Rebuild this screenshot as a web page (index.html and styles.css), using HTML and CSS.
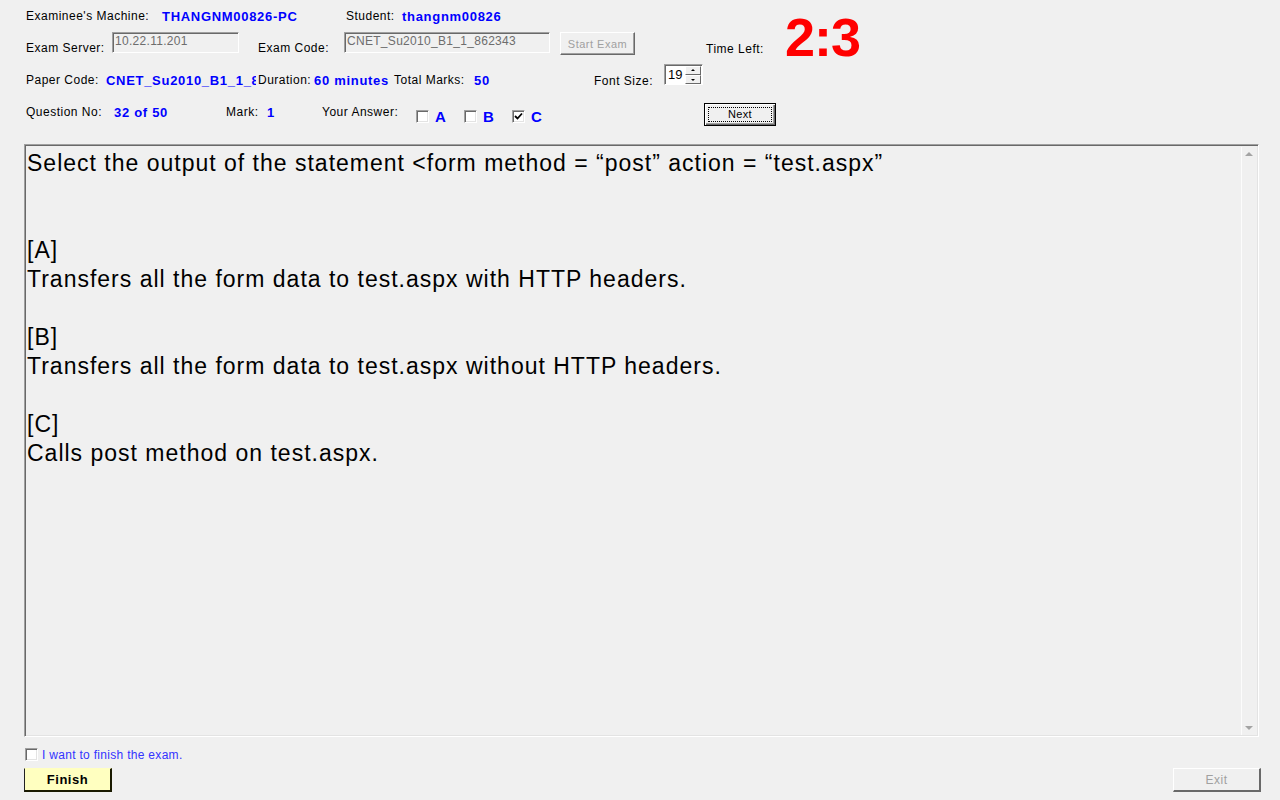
FILE: index.html
```html
<!DOCTYPE html>
<html>
<head>
<meta charset="utf-8">
<title>Exam Client</title>
<link rel="stylesheet" href="styles.css">
</head>
<body>
<div class="window">
  <div class="header">
    <div class="row row1">
      <span class="lbl w136">Examinee's Machine:</span>
      <span class="val w184">THANGNM00826-PC</span>
      <span class="lbl w56">Student:</span>
      <span class="val">thangnm00826</span>
    </div>
    <div class="row row2">
      <span class="lbl w86 low">Exam Server:</span>
      <span class="field w127">10.22.11.201</span>
      <span class="lbl w86 low gapl19">Exam Code:</span>
      <span class="field w206">CNET_Su2010_B1_1_862343</span>
      <span class="btn disabled start">Start Exam</span>
      <span class="lbl low timeleft">Time Left:</span>
      <span class="timer">2:3</span>
    </div>
    <div class="row row3">
      <span class="lbl w80">Paper Code:</span>
      <span class="val w150 clip">CNET_Su2010_B1_1_862343</span>
      <span class="lbl w56 dur">Duration:</span>
      <span class="val w80">60 minutes</span>
      <span class="lbl w80">Total Marks:</span>
      <span class="val w120">50</span>
      <span class="lbl w70 low2">Font Size:</span>
      <span class="spin"><span class="spinval">19</span><span class="spinbtns"><span class="sb up"></span><span class="sb down"></span></span></span>
    </div>
    <div class="row row4">
      <span class="lbl w88">Question No:</span>
      <span class="val w112">32 of 50</span>
      <span class="lbl w41">Mark:</span>
      <span class="val w55">1</span>
      <span class="lbl w94">Your Answer:</span>
      <span class="opt"><span class="cb"></span><span class="optl">A</span></span>
      <span class="opt"><span class="cb"></span><span class="optl">B</span></span>
      <span class="opt"><span class="cb checked"><svg width="9" height="9" viewBox="0 0 9 9"><path d="M1 4 L3.5 6.5 L8 1.5" stroke="#000" stroke-width="1.8" fill="none"/></svg></span><span class="optl">C</span></span>
      <span class="btn next"><span class="focus">Next</span></span>
    </div>
  </div>

  <div class="question">
    <div class="qtext">
      <p>Select the output of the statement &lt;form method = “post” action = “test.aspx”</p>
      <p>&nbsp;</p>
      <p>&nbsp;</p>
      <p>[A]</p>
      <p>Transfers all the form data to test.aspx with HTTP headers.</p>
      <p>&nbsp;</p>
      <p>[B]</p>
      <p>Transfers all the form data to test.aspx without HTTP headers.</p>
      <p>&nbsp;</p>
      <p>[C]</p>
      <p>Calls post method on test.aspx.</p>
    </div>
    <div class="scrollbar">
      <span class="arrow up-arrow"></span>
      <span class="arrow down-arrow"></span>
    </div>
  </div>

  <div class="finishrow">
    <span class="cb small"></span>
    <span class="finishlbl">I want to finish the exam.</span>
  </div>
  <div class="bottom">
    <span class="btn finish">Finish</span>
    <span class="btn disabled exit">Exit</span>
  </div>
</div>
</body>
</html>
```

FILE: styles.css
```css
html, body {
  margin: 0;
  padding: 0;
  background: #f0f0f0;
}
body {
  font-family: "Liberation Sans", Arial, sans-serif;
  font-size: 12px;
  letter-spacing: 0.5px;
  color: #000;
  width: 1280px;
  height: 800px;
  overflow: hidden;
}
.window {
  width: 1280px;
  height: 800px;
  display: flex;
  flex-direction: column;
}
.header {
  padding-left: 26px;
  display: flex;
  flex-direction: column;
}
.row {
  display: flex;
  align-items: center;
  white-space: nowrap;
}
.lbl { display: inline-block; }
.val {
  display: inline-block;
  color: #0000ff;
  font-weight: bold;
  font-size: 13px;
  letter-spacing: 0.7px;
}
.w41 { width: 41px; }
.w55 { width: 55px; }
.w56 { width: 56px; }
.w70 { width: 70px; }
.w80 { width: 80px; }
.w86 { width: 86px; }
.w88 { width: 88px; }
.w94 { width: 94px; }
.w112 { width: 112px; }
.w120 { width: 120px; }
.w136 { width: 136px; }
.w150 { width: 150px; }
.w184 { width: 184px; }
.clip { overflow: hidden; }
.dur { margin-left: 2px; }

.row1 {
  height: 32px;
  padding-bottom: 0;
}
.row2 {
  height: 23px;
  align-items: flex-start;
}
.row2 .low { padding-top: 9px; }
.gapl19 { margin-left: 19px; }
.field {
  display: inline-block;
  box-sizing: border-box;
  height: 21px;
  line-height: 17px;
  padding-left: 2px;
  background: #f0f0f0;
  color: #6d6d6d;
  letter-spacing: 0.3px;
  border-top: 1px solid #a0a0a0;
  border-left: 1px solid #a0a0a0;
  border-right: 1px solid #fff;
  border-bottom: 1px solid #fff;
  box-shadow: inset 1px 1px 0 #696969;
  overflow: hidden;
}
.w127 { width: 127px; }
.w206 { width: 206px; }
.btn {
  display: inline-flex;
  align-items: center;
  justify-content: center;
  box-sizing: border-box;
  font-size: 11px;
}
.disabled { color: #a0a0a0; }
.start {
  margin-left: 10px;
  width: 75px;
  height: 23px;
  border-top: 1px solid #fff;
  border-left: 1px solid #fff;
  border-right: 1px solid #696969;
  border-bottom: 1px solid #696969;
  box-shadow: inset -1px -1px 0 #a0a0a0;
  background: #f0f0f0;
}
.timeleft {
  margin-left: 71px;
  width: 79px;
  padding-top: 10px !important;
}
.timer {
  display: inline-block;
  color: #ff0000;
  font-weight: bold;
  font-size: 54px;
  line-height: 54px;
  letter-spacing: -1px;
  margin-top: -22px;
  height: 23px;
}

.row3 {
  height: 34px;
  margin-top: 8px;
  align-items: center;
}
.low2 { padding-top: 2px; }
.spin {
  display: inline-flex;
  box-sizing: border-box;
  width: 39px;
  height: 21px;
  margin-top: -12px;
  background: #fff;
  border-top: 1px solid #a0a0a0;
  border-left: 1px solid #a0a0a0;
  border-right: 1px solid #fff;
  border-bottom: 1px solid #fff;
  box-shadow: inset 1px 1px 0 #696969;
}
.spinval {
  font-size: 13px;
  letter-spacing: 0;
  line-height: 19px;
  padding-left: 3px;
  width: 18px;
}
.spinbtns {
  display: flex;
  flex-direction: column;
  width: 17px;
  padding-top: 1px;
}
.sb {
  display: block;
  box-sizing: border-box;
  height: 9px;
  width: 16px;
  background: #f0f0f0;
  border-top: 1px solid #fff;
  border-left: 1px solid #fff;
  border-right: 1px solid #696969;
  border-bottom: 1px solid #696969;
  position: relative;
}
.sb::after {
  content: "";
  position: absolute;
  left: 5px;
  width: 0;
  height: 0;
  border-left: 2px solid transparent;
  border-right: 2px solid transparent;
}
.sb.up::after { top: 2px; border-bottom: 2px solid #000; }
.sb.down::after { top: 3px; border-top: 2px solid #000; }

.row4 {
  height: 30px;
  align-items: center;
}
.opt {
  display: inline-flex;
  align-items: center;
  width: 48px;
  margin-top: 8px;
}
.cb {
  display: inline-flex;
  align-items: center;
  justify-content: center;
  box-sizing: border-box;
  width: 13px;
  height: 13px;
  background: #fff;
  border-top: 1px solid #a0a0a0;
  border-left: 1px solid #a0a0a0;
  border-right: 1px solid #fff;
  border-bottom: 1px solid #fff;
  box-shadow: inset 1px 1px 0 #696969, inset -1px -1px 0 #e3e3e3;
}
.optl {
  color: #0000ff;
  font-weight: bold;
  font-size: 15px;
  margin-left: 6px;
}
.next {
  margin-left: 144px;
  width: 72px;
  height: 23px;
  border: 1px solid #000;
  background: #f0f0f0;
  box-shadow: inset 1px 1px 0 #fff, inset -1px -1px 0 #696969, inset -2px -2px 0 #a0a0a0;
  padding: 3px;
  margin-top: 4px;
}
.focus {
  display: flex;
  align-items: center;
  justify-content: center;
  width: 100%;
  height: 100%;
  box-sizing: border-box;
  border: 1px dotted #000;
  font-size: 11px;
  letter-spacing: 0.3px;
}

.question {
  margin-top: 17px;
  margin-left: 24px;
  width: 1235px;
  height: 593px;
  box-sizing: border-box;
  display: flex;
  border-top: 1px solid #a0a0a0;
  border-left: 1px solid #a0a0a0;
  border-right: 1px solid #fff;
  border-bottom: 1px solid #fff;
  box-shadow: inset 1px 1px 0 #696969, inset -1px -1px 0 #e3e3e3;
}
.qtext {
  flex: 1;
  padding: 4px 0 0 2px;
  font-size: 23px;
  letter-spacing: 1px;
  line-height: 29px;
}
.qtext p { margin: 0; }
.scrollbar {
  width: 15px;
  margin: 2px 1px 1px 0;
  border-left: 1px solid #fcfcfc;
  background: #f0f0f0;
  position: relative;
}
.arrow {
  position: absolute;
  left: 3px;
  width: 0;
  height: 0;
  border-left: 4px solid transparent;
  border-right: 4px solid transparent;
}
.up-arrow { top: 5px; border-bottom: 4px solid #a3a3a3; }
.down-arrow { bottom: 5px; border-top: 4px solid #a3a3a3; }

.finishrow {
  display: flex;
  align-items: center;
  margin-top: 11px;
  margin-left: 25px;
  height: 13px;
}
.finishlbl {
  color: #3333ff;
  margin-left: 4px;
  font-size: 12px;
  letter-spacing: 0.3px;
}
.bottom {
  display: flex;
  justify-content: space-between;
  margin-top: 7px;
  padding-left: 24px;
  padding-right: 19px;
}
.finish {
  width: 88px;
  height: 24px;
  background: #ffffc0;
  font-weight: bold;
  font-size: 13px;
  border-left: 1px solid #222;
  border-top: 1px solid #ffffc0;
  border-right: 2px solid #1a1a00;
  border-bottom: 2px solid #1a1a00;
}
.exit {
  width: 88px;
  height: 24px;
  font-size: 12px;
  border-top: 1px solid #fff;
  border-left: 1px solid #fff;
  border-right: 2px solid #696969;
  border-bottom: 2px solid #696969;
}
```
